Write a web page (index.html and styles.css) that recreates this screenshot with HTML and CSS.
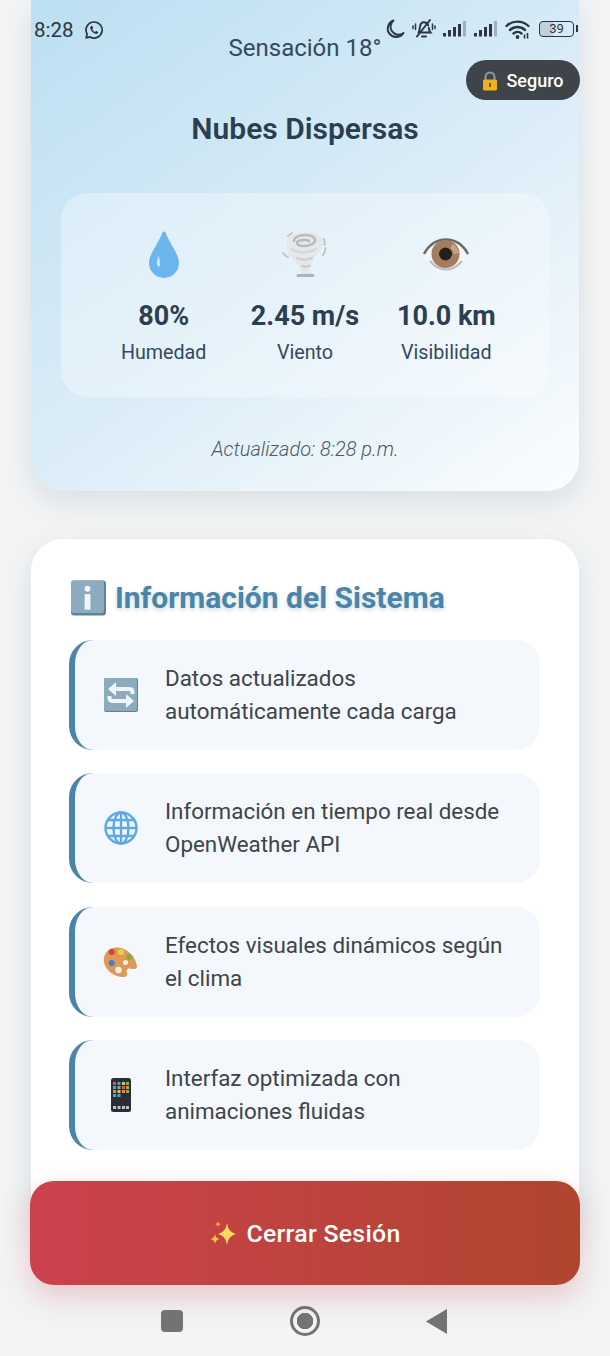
FILE: index.html
```html
<!DOCTYPE html>
<html lang="es">
<head>
    <meta charset="UTF-8">
    <meta name="viewport" content="width=device-width, initial-scale=1.0">
    <title>Clima</title>
    <link rel="stylesheet" href="styles.css">
</head>
<body>
    <div class="statusbar">
        <div class="status-left">
            <span class="clock">8:28</span>
            <svg class="wa" viewBox="0 0 20 20"><path d="M10 2a8 8 0 0 0-6.900 12L2.200 17.800l3.900-.9A8 8 0 1 0 10 2z" fill="none" stroke="#2b3640" stroke-width="1.700" stroke-linejoin="round"/><path d="M7.300 5.900c-.9.500-1.300 1.500-1 2.600.6 2.500 2.800 4.700 5.200 5.300 1.200.3 2.200-.1 2.700-1 .2-.4.100-.7-.2-.9l-1.500-.8c-.3-.1-.5 0-.7.200l-.6.7c-1.300-.5-2.300-1.500-2.900-2.800l.6-.6c.2-.2.300-.5.200-.7l-.7-1.600c-.2-.4-.6-.5-1.100-.4z" fill="#2b3640"/></svg>
        </div>
        <div class="status-right">
            <svg class="st-moon" viewBox="0 0 20 20"><path d="M8.500 1.500A8.500 8.500 0 1 0 18.500 14 8 8 0 0 1 8.500 1.500z" fill="none" stroke="#2b3640" stroke-width="2" stroke-linejoin="round"/></svg>
            <svg class="st-bell" viewBox="0 0 24 21"><path d="M6.500 14.500c1.200-1.500 1.200-3.500 1.400-5.300C8.200 6.300 10 4.200 12 4.200s3.500 1 4.200 3.300M16.800 10c.2 1.800.6 3.200 1.700 4.500H9.500M10 18.500h4" fill="none" stroke="#2b3640" stroke-width="2" stroke-linecap="round"/><path d="M5 18.500 18 2" stroke="#2b3640" stroke-width="2" stroke-linecap="round"/><path d="M3.500 6v5.500M1 8v2.500M20.500 6v5.500M23 8v2.500" stroke="#2b3640" stroke-width="1.500" stroke-linecap="round"/></svg>
            <svg class="st-signal" viewBox="0 0 24 16"><rect x="0" y="12" width="3" height="3.500" fill="#2b3640"/><rect x="5" y="9" width="3" height="6.500" fill="#2b3640"/><rect x="10" y="6" width="3" height="9.500" fill="#2b3640"/><rect x="15" y="3" width="3" height="12.500" fill="#2b3640"/><rect x="20" y="0" width="3" height="15.500" fill="#9fb0bc"/></svg>
            <svg class="st-signal" viewBox="0 0 24 16"><rect x="0" y="12" width="3" height="3.500" fill="#2b3640"/><rect x="5" y="9" width="3" height="6.500" fill="#2b3640"/><rect x="10" y="6" width="3" height="9.500" fill="#2b3640"/><rect x="15" y="3" width="3" height="12.500" fill="#2b3640"/><rect x="20" y="0" width="3" height="15.500" fill="#9fb0bc"/></svg>
            <svg class="st-wifi" viewBox="0 0 26 20"><path d="M1.500 7a16 16 0 0 1 22 0M5 11a11 11 0 0 1 15 0M8.500 14.500a6 6 0 0 1 8 0" fill="none" stroke="#2b3640" stroke-width="2.400" stroke-linecap="round"/><circle cx="12.500" cy="18" r="1.900" fill="#2b3640"/><path d="M19.500 15.500v4M22.500 14v5.500" stroke="#2b3640" stroke-width="1.600"/></svg>
            <div class="battery"><span class="battery-num">39</span></div>
        </div>
    </div>

    <div class="safe-badge">
        <svg class="lock" viewBox="0 0 16 20"><path d="M3.500 9V6a4.500 4.500 0 0 1 9 0v3" fill="none" stroke="#8b98a5" stroke-width="2"/><rect x="1" y="8.500" width="14" height="11" rx="1.500" fill="#f2b01e"/><rect x="7" y="12" width="2" height="4" fill="#7a5a10"/></svg>
        <span>Seguro</span>
    </div>

    <div class="page">
        <section class="weather-card">
            <p class="feels">Sensación 18°</p>
            <h2 class="condition">Nubes Dispersas</h2>
            <div class="stats">
                <div class="stat">
                    <svg class="stat-icon" viewBox="0 0 48 48"><path d="M24 1.500c1 0 1.700 1 2.200 2.400C29 12 39 24 39 33A15 15 0 0 1 9 33C9 24 19 12 21.800 3.900 22.300 2.500 23 1.500 24 1.500z" fill="#6cb6ee"/><path d="M19 26c-2 3-3 7-1.500 10 1 1.500 2.500.5 2.500-1 0-3-.5-6-1-9z" fill="#cfe6f7"/></svg>
                    <div class="stat-value">80%</div>
                    <div class="stat-label">Humedad</div>
                </div>
                <div class="stat">
                    <svg class="stat-icon" viewBox="0 0 48 48"><path d="M6 11C7 5 15 2 24 2s18 3 18 9c0 7-3 11-8 15-2 2-3 5-4 8-1 3-1 6 0 9l1 3H17l3-3c0-4-2-7-5-10-3-4-9-9-9-12z" fill="#e5e8ea"/><g fill="none" stroke-linecap="round"><path d="M13 11c0-4 6-6 11-6 6 0 10 2 10 5 0 4-6 6-11 6-4 0-7-1-7-3 0-2 4-3 8-3 2 0 4 .5 4 1.500" stroke="#b3bbc0" stroke-width="2.400"/><path d="M11 19c4 4 15 5 24 0" stroke="#d4d9dc" stroke-width="2.500"/><path d="M16 28c4 2 10 2 15 0" stroke="#cdd2d5" stroke-width="2.500"/><path d="M21 36c3 1 6 1 8-.5" stroke="#c4cacd" stroke-width="2"/><path d="M17 45.500h15" stroke="#adb4b8" stroke-width="3"/><path d="M7 6c1-1.500 2-2 4-3M2 23c1.500 2 3 3 5 4M43 9c1 2 1 4 .5 6M44.500 18c0 3-1 5-2.500 7" stroke="#bcc3c7" stroke-width="1.800"/></g></svg>
                    <div class="stat-value">2.45 m/s</div>
                    <div class="stat-label">Viento</div>
                </div>
                <div class="stat">
                    <svg class="stat-icon" viewBox="0 0 48 48"><path d="M1 24C7 13 15 8 24 8s17 5 23 16c-6 11-14 16-23 16S7 35 1 24z" fill="#f5f6f6"/><path d="M2 24C8 13 15 9.500 24 9.500S40 13 46 24" fill="none" stroke="#6a6a6a" stroke-width="2.500"/><path d="M8 31c5 6 10 8.500 16 8.500S35 37 40 31" fill="none" stroke="#b8bcbe" stroke-width="2"/><circle cx="23.500" cy="24" r="14" fill="#a67c5e"/><circle cx="23.500" cy="24" r="6.500" fill="#20201f"/><path d="M31 14c3 2 5 5 6 9l-5 1c-.5-2-2-5-4-6z" fill="#c7a48c"/></svg>
                    <div class="stat-value">10.0 km</div>
                    <div class="stat-label">Visibilidad</div>
                </div>
            </div>
            <p class="updated">Actualizado: 8:28 p.m.</p>
        </section>

        <section class="info-card">
            <h3 class="info-title">
                <svg class="info-icon" viewBox="0 0 36 36"><rect x="0" y="0" width="36" height="36" rx="3" fill="#5f8297"/><rect x="0" y="0" width="34" height="33.500" rx="3" fill="#8cabc0"/><circle cx="17" cy="8.500" r="3" fill="#f3f6f8"/><rect x="14" y="14" width="6" height="16" fill="#f3f6f8"/></svg>
                <span>Información del Sistema</span>
            </h3>
            <ul class="info-list">
                <li class="info-item">
                    <svg class="item-icon" viewBox="0 0 36 36"><rect x="1" y="1" width="34" height="34" rx="2" fill="#5f8297"/><rect x="1" y="1" width="33" height="33" rx="2" fill="#8cabbe"/><g fill="none" stroke="#f1f5f7" stroke-width="4"><path d="M11 12h15c2 0 3.500 1 3.500 3v2"/><path d="M25 24H10c-2 0-3.500-1-3.500-3v-2"/></g><path d="M13 5 5 12l8 7z" fill="#f1f5f7"/><path d="M23 17l8 7-8 7z" fill="#f1f5f7"/></svg>
                    <span>Datos actualizados automáticamente cada carga</span>
                </li>
                <li class="info-item">
                    <svg class="item-icon" viewBox="0 0 36 36"><g fill="none" stroke="#5ba8ea" stroke-width="2.400"><circle cx="18" cy="18" r="15.500"/><ellipse cx="18" cy="18" rx="7.500" ry="15.500"/><path d="M18 2.500v31M2.500 18h31M5 10h26M5 26h26"/></g></svg>
                    <span>Información en tiempo real desde OpenWeather API</span>
                </li>
                <li class="info-item">
                    <svg class="item-icon" viewBox="0 0 36 36"><path d="M13 3.500C5 4 0 10 1 18c1 8 10 15 19 15 3.500 0 5-1.500 4-4-1-2.500 0-5 3-4.500 5 1 8 1.500 6.500-4.500C31 10 22 3 13 3.500z" fill="#dd9a57"/><circle cx="8.700" cy="8" r="3" fill="#d8413a"/><circle cx="18" cy="8" r="3" fill="#f0cf3a"/><circle cx="26" cy="13" r="2.800" fill="#7fae3d"/><circle cx="8.700" cy="19" r="3" fill="#3f7fce"/><circle cx="22.500" cy="18.500" r="2.500" fill="#f2f1ec"/><circle cx="15.500" cy="26" r="3.200" fill="#f2f1ec"/></svg>
                    <span>Efectos visuales dinámicos según el clima</span>
                </li>
                <li class="info-item">
                    <svg class="item-icon" viewBox="0 0 36 36"><rect x="8" y="1" width="20" height="34" rx="2.500" fill="#2a2d33"/><g fill="#e2574c"><rect x="10" y="5" width="3" height="3"/><rect x="19" y="9" width="3" height="3"/></g><g fill="#4aa3df"><rect x="14.500" y="5" width="3" height="3"/><rect x="10" y="9" width="3" height="3"/><rect x="10" y="17" width="3" height="3"/><rect x="14.500" y="17" width="3" height="3"/></g><g fill="#f0c040"><rect x="19" y="5" width="3" height="3"/><rect x="14.500" y="13" width="3" height="3"/></g><g fill="#6dbb63"><rect x="23" y="5" width="3" height="3"/><rect x="14.500" y="9" width="3" height="3"/><rect x="23" y="13" width="3" height="3"/></g><g fill="#e98a3c"><rect x="23" y="9" width="3" height="3"/><rect x="10" y="13" width="3" height="3"/><rect x="19" y="13" width="3" height="3"/></g><g fill="#b9c3cc"><rect x="10" y="29" width="3" height="3"/><rect x="14.500" y="29" width="3" height="3"/><rect x="19" y="29" width="3" height="3"/><rect x="23" y="29" width="3" height="3"/></g></svg>
                    <span>Interfaz optimizada con animaciones fluidas</span>
                </li>
            </ul>
        </section>
    </div>

    <button class="logout">
        <svg class="spark" viewBox="0 0 28 28"><path d="M18 3c1 6 3 9 9 11-6 2-8 5-9 11-1-6-3-9-9-11 6-2 8-5 9-11z" fill="#fbd95a"/><path d="M6 14c.6 3 1.500 4 4.500 5-3 1-3.900 2-4.500 5-.6-3-1.500-4-4.500-5 3-1 3.900-2 4.500-5z" fill="#f6c343"/><path d="M9 1c.4 2 1 2.600 3 3.200-2 .6-2.600 1.200-3 3.200-.4-2-1-2.600-3-3.200 2-.6 2.600-1.200 3-3.200z" fill="#e8a93a"/></svg>
        <span>Cerrar Sesión</span>
    </button>

    <div class="navbar">
        <span class="nav-square"></span>
        <span class="nav-home"></span>
        <span class="nav-back"></span>
    </div>
</body>
</html>
```

FILE: styles.css
```css
* {
    box-sizing: border-box;
}
html, body {
    height: 1356px;
}
body {
    position: relative;
    margin: 0;
    overflow: hidden;
    font-family: Roboto, "Noto Sans", sans-serif;
    background-color: #f3f4f5;
    color: #2c3e50;
}
.page {
    display: flex;
    flex-direction: column;
    gap: 48px;
    padding: 0 31px;
}

/* status bar */
.statusbar {
    position: absolute;
    top: 0;
    left: 0;
    right: 0;
    z-index: 5;
    height: 60px;
    padding: 18px 36px 0 34px;
    display: flex;
    justify-content: space-between;
    align-items: flex-start;
    color: #2b3640;
}
.status-left {
    display: flex;
    align-items: center;
    gap: 10px;
    margin-top: 1px;
}
.clock {
    font-size: 20.500px;
    line-height: 22px;
}
.wa {
    width: 20px;
    height: 20px;
}
.status-right {
    display: flex;
    align-items: center;
    gap: 7px;
}
.st-moon {
    width: 20px;
    height: 20px;
}
.st-bell {
    width: 24px;
    height: 21px;
}
.st-signal {
    width: 24px;
    height: 16px;
}
.st-wifi {
    width: 26px;
    height: 20px;
}
.battery {
    position: relative;
    width: 35px;
    height: 16px;
    margin-left: 1px;
    border: 1.500px solid #2b3640;
    border-radius: 4px;
    background: linear-gradient(to right, #c3d0da 38%, transparent 38%);
    text-align: center;
}
.battery::after {
    content: "";
    position: absolute;
    right: -5px;
    top: 3px;
    width: 2px;
    height: 7px;
    background: #2b3640;
}
.battery-num {
    display: block;
    font-size: 13px;
    line-height: 13px;
}

.safe-badge {
    position: absolute;
    top: 60px;
    right: 30px;
    z-index: 5;
    width: 114px;
    height: 40px;
    display: flex;
    align-items: center;
    justify-content: center;
    gap: 8px;
    padding-top: 1px;
    border-radius: 20px;
    background-color: #3f444a;
    color: #fff;
    font-size: 18px;
    font-weight: 500;
}
.lock {
    width: 16px;
    height: 20px;
}

/* weather */
.weather-card {
    height: 491px;
    padding: 33px 30px 0;
    border-radius: 0 0 32px 32px;
    background: linear-gradient(145deg, #bcdff2 0%, #dcedf8 55%, #fbfdfe 100%);
    box-shadow: 0 10px 30px rgba(74, 110, 130, 0.16);
    text-align: center;
}
.feels {
    margin: 0;
    font-size: 24px;
    font-weight: 400;
    line-height: 30px;
    color: #34495e;
}
.condition {
    margin: 48px 0 0;
    font-size: 30px;
    font-weight: 600;
    line-height: 36px;
}
.stats {
    height: 204px;
    margin-top: 46px;
    padding: 37px 32px 0;
    display: grid;
    grid-template-columns: repeat(3, 1fr);
    border-radius: 26px;
    background: rgba(255, 255, 255, 0.32);
}
.stat-icon {
    display: block;
    width: 48px;
    height: 48px;
    margin: 0 auto;
}
.stat-value {
    margin-top: 22px;
    font-size: 27px;
    font-weight: 700;
    line-height: 32px;
    white-space: nowrap;
}
.stat-label {
    margin-top: 9px;
    font-size: 19.700px;
    line-height: 24px;
    color: #34495e;
}
.updated {
    margin: 40px 0 0;
    font-size: 20px;
    font-style: italic;
    font-weight: 300;
    line-height: 24px;
    color: #4d5a66;
}

/* info */
.info-card {
    height: 700px;
    padding: 39px 39px 0 38px;
    border-radius: 32px;
    background: #fff;
    box-shadow: 0 10px 30px rgba(74, 110, 130, 0.16);
}
.info-title {
    margin: 0;
    display: flex;
    align-items: center;
    gap: 9px;
    font-size: 30px;
    font-weight: 700;
    line-height: 40px;
    color: #4a84a8;
    text-shadow: 0 2px 4px rgba(74, 132, 168, 0.3);
}
.info-icon {
    width: 35px;
    height: 36px;
    margin-left: 2px;
}
.info-list {
    list-style: none;
    margin: 22px 0 0;
    padding: 0;
    display: flex;
    flex-direction: column;
    gap: 23.300px;
}
.info-item {
    height: 110px;
    padding: 0 30px 0 28px;
    display: flex;
    align-items: center;
    gap: 26px;
    border-left: 6px solid #4a84a8;
    border-radius: 24px;
    background: #f4f7fb;
    font-size: 22.400px;
    line-height: 33px;
    color: #3d444b;
}
.item-icon {
    flex: none;
    width: 36px;
    height: 36px;
}

/* bottom */
.logout {
    position: absolute;
    left: 30px;
    top: 1181px;
    z-index: 4;
    width: 550px;
    height: 104px;
    display: flex;
    align-items: center;
    justify-content: center;
    gap: 9px;
    padding-top: 2px;
    border: none;
    border-radius: 24px;
    background: linear-gradient(90deg, #cc414d 0%, #b0452f 100%);
    box-shadow: 0 12px 30px rgba(204, 65, 77, 0.25);
    color: #fff;
    font-family: inherit;
    font-size: 24.800px;
    font-weight: 500;
    letter-spacing: 0.3px;
}
.spark {
    width: 28px;
    height: 28px;
}
.navbar {
    position: absolute;
    top: 1302px;
    left: 0;
    right: 0;
    z-index: 5;
    height: 36px;
}
.nav-square {
    position: absolute;
    left: 161px;
    top: 8px;
    width: 22px;
    height: 22px;
    border-radius: 4px;
    background: #737373;
}
.nav-home {
    position: absolute;
    left: 290px;
    top: 4px;
    width: 30px;
    height: 30px;
    border: 3px solid #737373;
    border-radius: 50%;
    background: radial-gradient(circle, #737373 0 8px, transparent 8.500px);
}
.nav-back {
    position: absolute;
    left: 426px;
    top: 7px;
    width: 21px;
    height: 25px;
    background: #737373;
    clip-path: polygon(100% 0, 100% 100%, 0 50%);
}
```
